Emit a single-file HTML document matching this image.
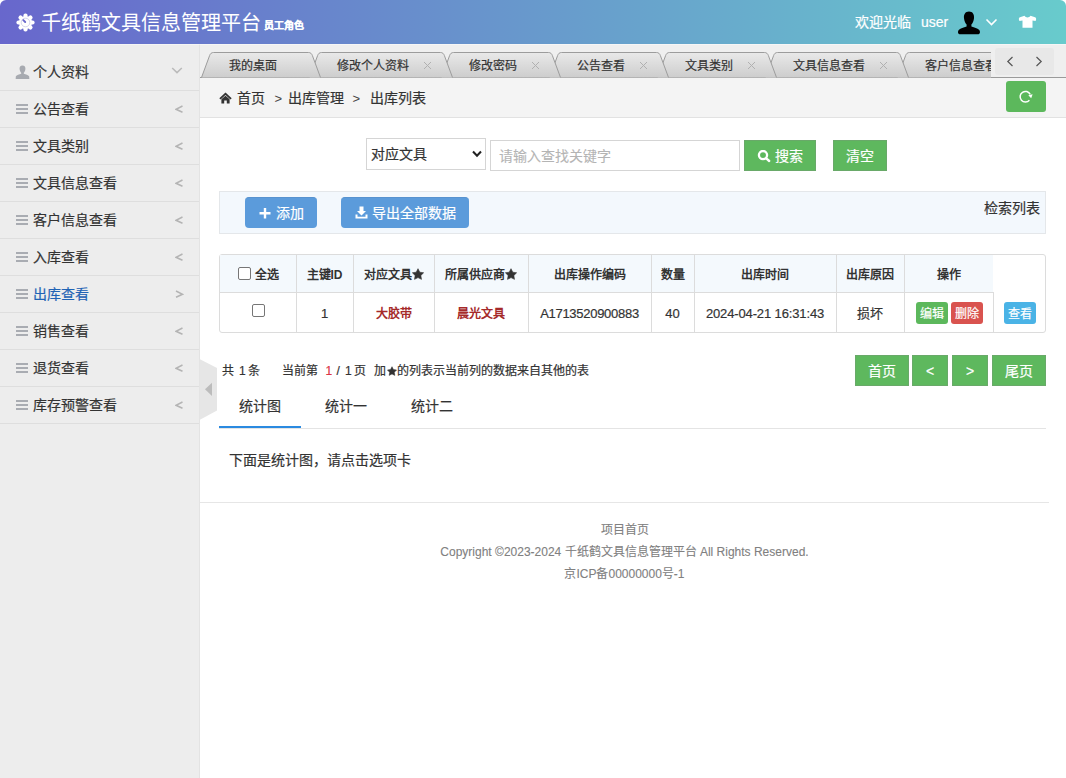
<!DOCTYPE html><html lang="zh-CN"><head><meta charset="utf-8"><style>
*{margin:0;padding:0;box-sizing:border-box}
html,body{width:1066px;height:778px;overflow:hidden;background:#fff}
body{position:relative;font-family:"Liberation Sans",sans-serif;color:#333;font-size:14px;-webkit-text-stroke:0.2px currentColor}
.a{position:absolute;white-space:nowrap}
</style></head><body>
<div class="a" style="left:0;top:0;width:1066px;height:44px;background:linear-gradient(to right,#6867cc,#68cbcc);border-radius:6px 6px 0 0"></div>
<svg class="a" style="left:15.5px;top:13px" width="19" height="19" viewBox="0 0 19 19">
<g fill="#fff"><circle cx="9.5" cy="9.5" r="6.6"/>
<g><rect x="7.4" y="0.4" width="4.2" height="4.4" rx="2"/><rect x="7.4" y="14.2" width="4.2" height="4.4" rx="2"/><rect x="0.4" y="7.4" width="4.4" height="4.2" rx="2"/><rect x="14.2" y="7.4" width="4.4" height="4.2" rx="2"/></g>
<g transform="rotate(45 9.5 9.5)"><rect x="7.4" y="0.4" width="4.2" height="4.4" rx="2"/><rect x="7.4" y="14.2" width="4.2" height="4.4" rx="2"/><rect x="0.4" y="7.4" width="4.4" height="4.2" rx="2"/><rect x="14.2" y="7.4" width="4.4" height="4.2" rx="2"/></g></g>
<circle cx="9.5" cy="9.5" r="4.3" fill="none" stroke="#b9b9e0" stroke-width="0.6"/>
<path d="M7.3 7.1 L9.2 9.0" stroke="#6a68cc" stroke-width="1.9" stroke-linecap="round"/>
</svg>
<div class="a" style="left:41px;top:10px;font-size:20px;line-height:26px;color:#fff;-webkit-text-stroke:0.05px currentColor">千纸鹤文具信息管理平台</div>
<div class="a" style="left:264px;top:19px;font-size:10px;line-height:14px;color:#fff;font-weight:bold">员工角色</div>
<div class="a" style="left:855px;top:12px;font-size:14px;line-height:20px;color:#fff">欢迎光临</div>
<div class="a" style="left:921px;top:12px;font-size:14px;line-height:20px;color:#fff">user</div>
<svg class="a" style="left:957px;top:11px" width="24" height="24" viewBox="0 0 24 24"><path fill="#000" d="M12 0.6 C8.3 0.6 6.6 3.5 7 7.2 C7.3 10 8.4 12.4 9.6 13.6 L9.6 15.4 C6.5 16.2 3.6 17.2 2 18.8 C0.6 20.2 0.6 22.8 2.6 23.2 L21.4 23.2 C23.4 22.8 23.4 20.2 22 18.8 C20.4 17.2 17.5 16.2 14.4 15.4 L14.4 13.6 C15.6 12.4 16.7 10 17 7.2 C17.4 3.5 15.7 0.6 12 0.6 Z"/></svg>
<svg class="a" style="left:985px;top:18px" width="13" height="9" viewBox="0 0 13 9"><path d="M1.5 1.5 L6.5 6.5 L11.5 1.5" fill="none" stroke="#fff" stroke-width="1.6"/></svg>
<svg class="a" style="left:1018px;top:15px" width="19" height="14" viewBox="0 0 19 14"><path fill="#fff" d="M6.5 0.8 C7.3 2 8.2 2.5 9.5 2.5 C10.8 2.5 11.7 2 12.5 0.8 L17 2.3 C17.9 2.7 18.3 3.5 18.1 4.5 L17.6 6 L14.5 5.5 L14.5 12.8 L4.5 12.8 L4.5 5.5 L1.4 6 L0.9 4.5 C0.7 3.5 1.1 2.7 2 2.3 Z"/></svg>
<div class="a" style="left:0;top:44px;width:200px;height:734px;background:#ededed;border-right:1px solid #e3e3e3"></div>
<div class="a" style="left:0;top:90px;width:199px;height:1px;background:#dedede"></div>
<div class="a" style="left:33px;top:62.0px;font-size:14px;line-height:20px;color:#333">个人资料</div>
<svg class="a" style="left:14.5px;top:65.0px" width="15" height="14" viewBox="0 0 14 13.3" preserveAspectRatio="none"><path fill="#a7aab0" d="M7 0.5 C5 0.5 4 2 4.3 4 C4.5 5.6 5.3 6.8 5.8 7.3 L5.8 8.3 C4 8.9 1.5 9.4 0.8 10.8 L0.6 13.3 L13.4 13.3 L13.2 10.8 C12.5 9.4 10 8.9 8.2 8.3 L8.2 7.3 C8.7 6.8 9.5 5.6 9.7 4 C10 2 9 0.5 7 0.5Z"/></svg>
<svg class="a" style="left:171px;top:67.0px" width="12" height="8" viewBox="0 0 12 8"><path d="M1.2 1 L6 5.6 L10.8 1" fill="none" stroke="#bababa" stroke-width="1.5"/></svg>
<div class="a" style="left:0;top:127px;width:199px;height:1px;background:#dedede"></div>
<div class="a" style="left:33px;top:99.0px;font-size:14px;line-height:20px;color:#333">公告查看</div>
<div class="a" style="left:16px;top:104px;width:12px;height:2px;background:#a9acb2"></div>
<div class="a" style="left:16px;top:108px;width:12px;height:2px;background:#a9acb2"></div>
<div class="a" style="left:16px;top:112px;width:12px;height:2px;background:#a9acb2"></div>
<svg class="a" style="left:174.5px;top:104.7px" width="9" height="9" viewBox="0 0 9 9"><path d="M7.5 1 L1 4.3 L7.5 7.3" fill="none" stroke="#b4b4b4" stroke-width="1.5"/></svg>
<div class="a" style="left:0;top:164px;width:199px;height:1px;background:#dedede"></div>
<div class="a" style="left:33px;top:136.0px;font-size:14px;line-height:20px;color:#333">文具类别</div>
<div class="a" style="left:16px;top:141px;width:12px;height:2px;background:#a9acb2"></div>
<div class="a" style="left:16px;top:145px;width:12px;height:2px;background:#a9acb2"></div>
<div class="a" style="left:16px;top:149px;width:12px;height:2px;background:#a9acb2"></div>
<svg class="a" style="left:174.5px;top:141.7px" width="9" height="9" viewBox="0 0 9 9"><path d="M7.5 1 L1 4.3 L7.5 7.3" fill="none" stroke="#b4b4b4" stroke-width="1.5"/></svg>
<div class="a" style="left:0;top:201px;width:199px;height:1px;background:#dedede"></div>
<div class="a" style="left:33px;top:173.0px;font-size:14px;line-height:20px;color:#333">文具信息查看</div>
<div class="a" style="left:16px;top:178px;width:12px;height:2px;background:#a9acb2"></div>
<div class="a" style="left:16px;top:182px;width:12px;height:2px;background:#a9acb2"></div>
<div class="a" style="left:16px;top:186px;width:12px;height:2px;background:#a9acb2"></div>
<svg class="a" style="left:174.5px;top:178.7px" width="9" height="9" viewBox="0 0 9 9"><path d="M7.5 1 L1 4.3 L7.5 7.3" fill="none" stroke="#b4b4b4" stroke-width="1.5"/></svg>
<div class="a" style="left:0;top:238px;width:199px;height:1px;background:#dedede"></div>
<div class="a" style="left:33px;top:210.0px;font-size:14px;line-height:20px;color:#333">客户信息查看</div>
<div class="a" style="left:16px;top:215px;width:12px;height:2px;background:#a9acb2"></div>
<div class="a" style="left:16px;top:219px;width:12px;height:2px;background:#a9acb2"></div>
<div class="a" style="left:16px;top:223px;width:12px;height:2px;background:#a9acb2"></div>
<svg class="a" style="left:174.5px;top:215.7px" width="9" height="9" viewBox="0 0 9 9"><path d="M7.5 1 L1 4.3 L7.5 7.3" fill="none" stroke="#b4b4b4" stroke-width="1.5"/></svg>
<div class="a" style="left:0;top:275px;width:199px;height:1px;background:#dedede"></div>
<div class="a" style="left:33px;top:247.0px;font-size:14px;line-height:20px;color:#333">入库查看</div>
<div class="a" style="left:16px;top:252px;width:12px;height:2px;background:#a9acb2"></div>
<div class="a" style="left:16px;top:256px;width:12px;height:2px;background:#a9acb2"></div>
<div class="a" style="left:16px;top:260px;width:12px;height:2px;background:#a9acb2"></div>
<svg class="a" style="left:174.5px;top:252.7px" width="9" height="9" viewBox="0 0 9 9"><path d="M7.5 1 L1 4.3 L7.5 7.3" fill="none" stroke="#b4b4b4" stroke-width="1.5"/></svg>
<div class="a" style="left:0;top:312px;width:199px;height:1px;background:#dedede"></div>
<div class="a" style="left:33px;top:284.0px;font-size:14px;line-height:20px;color:#1f63b5">出库查看</div>
<div class="a" style="left:16px;top:289px;width:12px;height:2px;background:#a9acb2"></div>
<div class="a" style="left:16px;top:293px;width:12px;height:2px;background:#a9acb2"></div>
<div class="a" style="left:16px;top:297px;width:12px;height:2px;background:#a9acb2"></div>
<svg class="a" style="left:174.5px;top:289.7px" width="9" height="9" viewBox="0 0 9 9"><path d="M1 1 L7.5 4.3 L1 7.3" fill="none" stroke="#b4b4b4" stroke-width="1.5"/></svg>
<div class="a" style="left:0;top:349px;width:199px;height:1px;background:#dedede"></div>
<div class="a" style="left:33px;top:321.0px;font-size:14px;line-height:20px;color:#333">销售查看</div>
<div class="a" style="left:16px;top:326px;width:12px;height:2px;background:#a9acb2"></div>
<div class="a" style="left:16px;top:330px;width:12px;height:2px;background:#a9acb2"></div>
<div class="a" style="left:16px;top:334px;width:12px;height:2px;background:#a9acb2"></div>
<svg class="a" style="left:174.5px;top:326.7px" width="9" height="9" viewBox="0 0 9 9"><path d="M7.5 1 L1 4.3 L7.5 7.3" fill="none" stroke="#b4b4b4" stroke-width="1.5"/></svg>
<div class="a" style="left:0;top:386px;width:199px;height:1px;background:#dedede"></div>
<div class="a" style="left:33px;top:358.0px;font-size:14px;line-height:20px;color:#333">退货查看</div>
<div class="a" style="left:16px;top:363px;width:12px;height:2px;background:#a9acb2"></div>
<div class="a" style="left:16px;top:367px;width:12px;height:2px;background:#a9acb2"></div>
<div class="a" style="left:16px;top:371px;width:12px;height:2px;background:#a9acb2"></div>
<svg class="a" style="left:174.5px;top:363.7px" width="9" height="9" viewBox="0 0 9 9"><path d="M7.5 1 L1 4.3 L7.5 7.3" fill="none" stroke="#b4b4b4" stroke-width="1.5"/></svg>
<div class="a" style="left:0;top:423px;width:199px;height:1px;background:#dedede"></div>
<div class="a" style="left:33px;top:395.0px;font-size:14px;line-height:20px;color:#333">库存预警查看</div>
<div class="a" style="left:16px;top:400px;width:12px;height:2px;background:#a9acb2"></div>
<div class="a" style="left:16px;top:404px;width:12px;height:2px;background:#a9acb2"></div>
<div class="a" style="left:16px;top:408px;width:12px;height:2px;background:#a9acb2"></div>
<svg class="a" style="left:174.5px;top:400.7px" width="9" height="9" viewBox="0 0 9 9"><path d="M7.5 1 L1 4.3 L7.5 7.3" fill="none" stroke="#b4b4b4" stroke-width="1.5"/></svg>
<svg class="a" style="left:199px;top:358px" width="19" height="63" viewBox="0 0 19 63"><path d="M0.5 1 L18 10 L18 52.5 L0.5 62 Z" fill="#e6e6e6"/><path d="M6 31.3 L13 24.8 L13 38 Z" fill="#bcbcbc"/></svg>
<div class="a" style="left:200px;top:44px;width:866px;height:34px;background:#efefef"></div>
<div class="a" style="left:200px;top:78px;width:866px;height:40px;background:#f4f4f4;border-bottom:1px solid #e2e2e2"></div>
<div class="a" style="left:200px;top:77px;width:866px;height:1px;background:#9a9a9a"></div>
<div class="a" style="left:200px;top:44px;width:791px;height:34px;overflow:hidden">
<div class="a" style="left:calc(-200px + 200.5px);top:8px;width:120px;height:26px;z-index:100"><svg class="a" style="left:0;top:0" width="120" height="26" viewBox="0 0 120 26"><defs><linearGradient id="tg0" x1="0" y1="0" x2="0" y2="1"><stop offset="0" stop-color="#e9e9e9"/><stop offset="1" stop-color="#cdcdcd"/></linearGradient></defs><path d="M0.5 25.5 L8.6 3.6 C9.3 1.6 10.5 0.5 12.6 0.5 L107.4 0.5 C109.5 0.5 110.7 1.6 111.4 3.6 L119.5 25.5 Z" fill="url(#tg0)"/><path d="M0.5 25.5 L8.6 3.6 C9.3 1.6 10.5 0.5 12.6 0.5 L107.4 0.5 C109.5 0.5 110.7 1.6 111.4 3.6 L119.5 25.5" fill="none" stroke="#9c9c9c" stroke-width="1"/></svg><div class="a" style="left:28px;top:6px;font-size:12px;line-height:16px;color:#333">我的桌面</div></div>
<div class="a" style="left:calc(-200px + 308.5px);top:8px;width:144px;height:26px;z-index:99"><svg class="a" style="left:0;top:0" width="144" height="26" viewBox="0 0 144 26"><defs><linearGradient id="tg1" x1="0" y1="0" x2="0" y2="1"><stop offset="0" stop-color="#e9e9e9"/><stop offset="1" stop-color="#cdcdcd"/></linearGradient></defs><path d="M0.5 25.5 L8.6 3.6 C9.3 1.6 10.5 0.5 12.6 0.5 L131.4 0.5 C133.5 0.5 134.7 1.6 135.4 3.6 L143.5 25.5 Z" fill="url(#tg1)"/><path d="M0.5 25.5 L8.6 3.6 C9.3 1.6 10.5 0.5 12.6 0.5 L131.4 0.5 C133.5 0.5 134.7 1.6 135.4 3.6 L143.5 25.5" fill="none" stroke="#9c9c9c" stroke-width="1"/></svg><div class="a" style="left:28px;top:6px;font-size:12px;line-height:16px;color:#333">修改个人资料</div><svg class="a" style="left:114px;top:9px" width="9" height="9" viewBox="0 0 9 9"><path d="M1 1 L8 8 M8 1 L1 8" stroke="#b0b0b0" stroke-width="1"/></svg></div>
<div class="a" style="left:calc(-200px + 440.5px);top:8px;width:120px;height:26px;z-index:98"><svg class="a" style="left:0;top:0" width="120" height="26" viewBox="0 0 120 26"><defs><linearGradient id="tg2" x1="0" y1="0" x2="0" y2="1"><stop offset="0" stop-color="#e9e9e9"/><stop offset="1" stop-color="#cdcdcd"/></linearGradient></defs><path d="M0.5 25.5 L8.6 3.6 C9.3 1.6 10.5 0.5 12.6 0.5 L107.4 0.5 C109.5 0.5 110.7 1.6 111.4 3.6 L119.5 25.5 Z" fill="url(#tg2)"/><path d="M0.5 25.5 L8.6 3.6 C9.3 1.6 10.5 0.5 12.6 0.5 L107.4 0.5 C109.5 0.5 110.7 1.6 111.4 3.6 L119.5 25.5" fill="none" stroke="#9c9c9c" stroke-width="1"/></svg><div class="a" style="left:28px;top:6px;font-size:12px;line-height:16px;color:#333">修改密码</div><svg class="a" style="left:90px;top:9px" width="9" height="9" viewBox="0 0 9 9"><path d="M1 1 L8 8 M8 1 L1 8" stroke="#b0b0b0" stroke-width="1"/></svg></div>
<div class="a" style="left:calc(-200px + 548.5px);top:8px;width:120px;height:26px;z-index:97"><svg class="a" style="left:0;top:0" width="120" height="26" viewBox="0 0 120 26"><defs><linearGradient id="tg3" x1="0" y1="0" x2="0" y2="1"><stop offset="0" stop-color="#e9e9e9"/><stop offset="1" stop-color="#cdcdcd"/></linearGradient></defs><path d="M0.5 25.5 L8.6 3.6 C9.3 1.6 10.5 0.5 12.6 0.5 L107.4 0.5 C109.5 0.5 110.7 1.6 111.4 3.6 L119.5 25.5 Z" fill="url(#tg3)"/><path d="M0.5 25.5 L8.6 3.6 C9.3 1.6 10.5 0.5 12.6 0.5 L107.4 0.5 C109.5 0.5 110.7 1.6 111.4 3.6 L119.5 25.5" fill="none" stroke="#9c9c9c" stroke-width="1"/></svg><div class="a" style="left:28px;top:6px;font-size:12px;line-height:16px;color:#333">公告查看</div><svg class="a" style="left:90px;top:9px" width="9" height="9" viewBox="0 0 9 9"><path d="M1 1 L8 8 M8 1 L1 8" stroke="#b0b0b0" stroke-width="1"/></svg></div>
<div class="a" style="left:calc(-200px + 656.5px);top:8px;width:120px;height:26px;z-index:96"><svg class="a" style="left:0;top:0" width="120" height="26" viewBox="0 0 120 26"><defs><linearGradient id="tg4" x1="0" y1="0" x2="0" y2="1"><stop offset="0" stop-color="#e9e9e9"/><stop offset="1" stop-color="#cdcdcd"/></linearGradient></defs><path d="M0.5 25.5 L8.6 3.6 C9.3 1.6 10.5 0.5 12.6 0.5 L107.4 0.5 C109.5 0.5 110.7 1.6 111.4 3.6 L119.5 25.5 Z" fill="url(#tg4)"/><path d="M0.5 25.5 L8.6 3.6 C9.3 1.6 10.5 0.5 12.6 0.5 L107.4 0.5 C109.5 0.5 110.7 1.6 111.4 3.6 L119.5 25.5" fill="none" stroke="#9c9c9c" stroke-width="1"/></svg><div class="a" style="left:28px;top:6px;font-size:12px;line-height:16px;color:#333">文具类别</div><svg class="a" style="left:90px;top:9px" width="9" height="9" viewBox="0 0 9 9"><path d="M1 1 L8 8 M8 1 L1 8" stroke="#b0b0b0" stroke-width="1"/></svg></div>
<div class="a" style="left:calc(-200px + 764.5px);top:8px;width:144px;height:26px;z-index:95"><svg class="a" style="left:0;top:0" width="144" height="26" viewBox="0 0 144 26"><defs><linearGradient id="tg5" x1="0" y1="0" x2="0" y2="1"><stop offset="0" stop-color="#e9e9e9"/><stop offset="1" stop-color="#cdcdcd"/></linearGradient></defs><path d="M0.5 25.5 L8.6 3.6 C9.3 1.6 10.5 0.5 12.6 0.5 L131.4 0.5 C133.5 0.5 134.7 1.6 135.4 3.6 L143.5 25.5 Z" fill="url(#tg5)"/><path d="M0.5 25.5 L8.6 3.6 C9.3 1.6 10.5 0.5 12.6 0.5 L131.4 0.5 C133.5 0.5 134.7 1.6 135.4 3.6 L143.5 25.5" fill="none" stroke="#9c9c9c" stroke-width="1"/></svg><div class="a" style="left:28px;top:6px;font-size:12px;line-height:16px;color:#333">文具信息查看</div><svg class="a" style="left:114px;top:9px" width="9" height="9" viewBox="0 0 9 9"><path d="M1 1 L8 8 M8 1 L1 8" stroke="#b0b0b0" stroke-width="1"/></svg></div>
<div class="a" style="left:calc(-200px + 896.5px);top:8px;width:144px;height:26px;z-index:94"><svg class="a" style="left:0;top:0" width="144" height="26" viewBox="0 0 144 26"><defs><linearGradient id="tg6" x1="0" y1="0" x2="0" y2="1"><stop offset="0" stop-color="#e9e9e9"/><stop offset="1" stop-color="#cdcdcd"/></linearGradient></defs><path d="M0.5 25.5 L8.6 3.6 C9.3 1.6 10.5 0.5 12.6 0.5 L131.4 0.5 C133.5 0.5 134.7 1.6 135.4 3.6 L143.5 25.5 Z" fill="url(#tg6)"/><path d="M0.5 25.5 L8.6 3.6 C9.3 1.6 10.5 0.5 12.6 0.5 L131.4 0.5 C133.5 0.5 134.7 1.6 135.4 3.6 L143.5 25.5" fill="none" stroke="#9c9c9c" stroke-width="1"/></svg><div class="a" style="left:28px;top:6px;font-size:12px;line-height:16px;color:#333">客户信息查看</div><svg class="a" style="left:114px;top:9px" width="9" height="9" viewBox="0 0 9 9"><path d="M1 1 L8 8 M8 1 L1 8" stroke="#b0b0b0" stroke-width="1"/></svg></div>
</div>
<div class="a" style="left:0;top:44px;width:1066px;height:1px;background:rgba(255,255,255,0.45);z-index:200"></div>
<div class="a" style="left:995px;top:48px;width:59px;height:27px;background:#e8e8e8;border-radius:3px"></div>
<svg class="a" style="left:1006px;top:56px" width="8" height="11" viewBox="0 0 8 11"><path d="M6.5 1 L1.8 5.5 L6.5 10" fill="none" stroke="#555" stroke-width="1.2"/></svg>
<svg class="a" style="left:1035px;top:56px" width="8" height="11" viewBox="0 0 8 11"><path d="M1.5 1 L6.2 5.5 L1.5 10" fill="none" stroke="#555" stroke-width="1.2"/></svg>
<div class="a" style="left:1006px;top:81px;width:40px;height:31px;background:#5cb85c;border-radius:3px"></div>
<svg class="a" style="left:1017px;top:88px" width="17" height="17" viewBox="0 0 17 17"><path d="M12.4 12.2 A5.3 5.3 0 1 1 13.2 6.4" fill="none" stroke="#fff" stroke-width="1.5"/><path d="M11.3 7.3 L15.6 6.2 L14.2 10.2 Z" fill="#fff"/></svg>
<svg class="a" style="left:219px;top:92px" width="13" height="12" viewBox="0 0 13 12"><path d="M6.5 0.5 L0.3 6.2 L1.6 7.4 L6.5 2.9 L11.4 7.4 L12.7 6.2 Z M2.4 7.3 L6.5 3.7 L10.6 7.3 L10.6 11.5 L7.8 11.5 L7.8 8.6 L5.2 8.6 L5.2 11.5 L2.4 11.5 Z" fill="#333"/></svg>
<div class="a" style="left:237px;top:88px;font-size:14px;line-height:20px;color:#333">首页</div>
<div class="a" style="left:274.5px;top:89px;font-size:13px;line-height:20px;color:#444;-webkit-text-stroke:0">&gt;</div>
<div class="a" style="left:288px;top:88px;font-size:14px;line-height:20px;color:#333">出库管理</div>
<div class="a" style="left:352.5px;top:89px;font-size:13px;line-height:20px;color:#444;-webkit-text-stroke:0">&gt;</div>
<div class="a" style="left:370px;top:88px;font-size:14px;line-height:20px;color:#333">出库列表</div>
<div class="a" style="left:366px;top:138px;width:120px;height:32px;border:1px solid #d5d5d5;background:#fff"></div>
<div class="a" style="left:371px;top:144px;font-size:14px;line-height:20px;color:#333">对应文具</div>
<svg class="a" style="left:472px;top:150px" width="10" height="8" viewBox="0 0 10 8"><path d="M1 1.5 L5 5.8 L9 1.5" fill="none" stroke="#222" stroke-width="2"/></svg>
<div class="a" style="left:490px;top:140px;width:250px;height:31px;border:1px solid #d5d5d5;background:#fff"></div>
<div class="a" style="left:499px;top:146px;font-size:14px;line-height:20px;color:#b4b4b4;-webkit-text-stroke:0.1px currentColor">请输入查找关键字</div>
<div class="a" style="left:744px;top:140px;width:72px;height:31px;background:#5eb85e;border:1px solid #69a969"></div>
<svg class="a" style="left:757px;top:150px" width="14" height="13" viewBox="0 0 14 13"><circle cx="6" cy="5.1" r="4.1" fill="none" stroke="#fff" stroke-width="2.3"/><path d="M9.2 8.4 L12.2 11" stroke="#fff" stroke-width="2.4" stroke-linecap="round"/></svg>
<div class="a" style="left:775px;top:146px;font-size:14px;line-height:20px;color:#fff">搜索</div>
<div class="a" style="left:833px;top:140px;width:54px;height:31px;background:#5eb85e;border:1px solid #69a969"></div>
<div class="a" style="left:846px;top:146px;font-size:14px;line-height:20px;color:#fff">清空</div>
<div class="a" style="left:219px;top:191px;width:827px;height:43px;background:#f3f8fd;border:1px solid #e4e7ea"></div>
<div class="a" style="left:245px;top:197px;width:72px;height:31px;background:#5b9bdb;border-radius:4px;border-top:1px solid #5792cf"></div>
<svg class="a" style="left:259px;top:207px" width="12" height="12" viewBox="0 0 12 12"><path d="M6 1 V11.5 M0.5 6.3 H11.5" stroke="#fff" stroke-width="2.4"/></svg>
<div class="a" style="left:276px;top:203px;font-size:14px;line-height:20px;color:#fff">添加</div>
<div class="a" style="left:341px;top:197px;width:128px;height:31px;background:#5b9bdb;border-radius:4px;border-top:1px solid #5792cf"></div>
<svg class="a" style="left:355px;top:206px" width="13" height="13" viewBox="0 0 13 13"><path d="M4.5 0.5 H8.5 V5 H11 L6.5 9.5 L2 5 H4.5 Z" fill="#fff"/><path d="M0.5 8.5 V12.5 H12.5 V8.5 H10.5 V10.8 H2.5 V8.5 Z" fill="#fff"/></svg>
<div class="a" style="left:372px;top:203px;font-size:14px;line-height:20px;color:#fff">导出全部数据</div>
<div class="a" style="left:984px;top:198px;font-size:14px;line-height:20px;color:#333">检索列表</div>
<div class="a" style="left:219px;top:254px;width:827px;height:79px;border:1px solid #dcdcdc;border-radius:3px;background:#fff"></div>
<div class="a" style="left:220px;top:255px;width:773px;height:37px;background:#f4f9fd"></div>
<div class="a" style="left:220px;top:292px;width:774px;height:1px;background:#dcdcdc"></div>
<div class="a" style="left:296px;top:255px;width:1px;height:77px;background:#dcdcdc"></div>
<div class="a" style="left:353px;top:255px;width:1px;height:77px;background:#dcdcdc"></div>
<div class="a" style="left:434px;top:255px;width:1px;height:77px;background:#dcdcdc"></div>
<div class="a" style="left:528px;top:255px;width:1px;height:77px;background:#dcdcdc"></div>
<div class="a" style="left:651px;top:255px;width:1px;height:77px;background:#dcdcdc"></div>
<div class="a" style="left:694px;top:255px;width:1px;height:77px;background:#dcdcdc"></div>
<div class="a" style="left:836px;top:255px;width:1px;height:77px;background:#dcdcdc"></div>
<div class="a" style="left:904px;top:255px;width:1px;height:77px;background:#dcdcdc"></div>
<div class="a" style="left:993px;top:292px;width:1px;height:40px;background:#dcdcdc"></div>
<div class="a" style="left:238px;top:267px;width:13px;height:13px;border:1px solid #767676;border-radius:2px;background:#fff"></div>
<div class="a" style="left:255px;top:265px;font-size:12px;line-height:20px;font-weight:bold;-webkit-text-stroke:0;color:#333">全选</div>
<div class="a" style="left:296px;top:265px;width:57px;text-align:center;font-size:12px;line-height:20px;font-weight:bold;-webkit-text-stroke:0;color:#333">主键ID</div>
<div class="a" style="left:353px;top:265px;width:81px;text-align:center;font-size:12px;line-height:20px;font-weight:bold;-webkit-text-stroke:0;color:#333">对应文具<svg width="12" height="12" viewBox="0 0 12 12" style="vertical-align:-1px"><path d="M6.00,0.70 L7.76,4.17 L11.61,4.78 L8.85,7.53 L9.47,11.37 L6.00,9.60 L2.53,11.37 L3.15,7.53 L0.39,4.78 L4.24,4.17Z" fill="#333" stroke="#333" stroke-width="0.6" stroke-linejoin="round"/></svg></div>
<div class="a" style="left:434px;top:265px;width:94px;text-align:center;font-size:12px;line-height:20px;font-weight:bold;-webkit-text-stroke:0;color:#333">所属供应商<svg width="12" height="12" viewBox="0 0 12 12" style="vertical-align:-1px"><path d="M6.00,0.70 L7.76,4.17 L11.61,4.78 L8.85,7.53 L9.47,11.37 L6.00,9.60 L2.53,11.37 L3.15,7.53 L0.39,4.78 L4.24,4.17Z" fill="#333" stroke="#333" stroke-width="0.6" stroke-linejoin="round"/></svg></div>
<div class="a" style="left:528px;top:265px;width:123px;text-align:center;font-size:12px;line-height:20px;font-weight:bold;-webkit-text-stroke:0;color:#333">出库操作编码</div>
<div class="a" style="left:651px;top:265px;width:43px;text-align:center;font-size:12px;line-height:20px;font-weight:bold;-webkit-text-stroke:0;color:#333">数量</div>
<div class="a" style="left:694px;top:265px;width:142px;text-align:center;font-size:12px;line-height:20px;font-weight:bold;-webkit-text-stroke:0;color:#333">出库时间</div>
<div class="a" style="left:836px;top:265px;width:68px;text-align:center;font-size:12px;line-height:20px;font-weight:bold;-webkit-text-stroke:0;color:#333">出库原因</div>
<div class="a" style="left:904px;top:265px;width:89px;text-align:center;font-size:12px;line-height:20px;font-weight:bold;-webkit-text-stroke:0;color:#333">操作</div>
<div class="a" style="left:252px;top:304px;width:13px;height:13px;border:1px solid #767676;border-radius:2px;background:#fff"></div>
<div class="a" style="left:296px;top:304px;width:57px;text-align:center;font-size:13px;line-height:20px;color:#333;letter-spacing:0">1</div>
<div class="a" style="left:353px;top:304px;width:81px;text-align:center;font-size:12px;line-height:20px;font-weight:bold;-webkit-text-stroke:0;color:#a52a2a">大胶带</div>
<div class="a" style="left:434px;top:304px;width:94px;text-align:center;font-size:12px;line-height:20px;font-weight:bold;-webkit-text-stroke:0;color:#a52a2a">晨光文具</div>
<div class="a" style="left:528px;top:304px;width:123px;text-align:center;font-size:13px;line-height:20px;color:#333;letter-spacing:-0.28px">A1713520900883</div>
<div class="a" style="left:651px;top:304px;width:43px;text-align:center;font-size:13px;line-height:20px;color:#333;letter-spacing:0">40</div>
<div class="a" style="left:694px;top:304px;width:142px;text-align:center;font-size:13px;line-height:20px;color:#333;letter-spacing:-0.13px">2024-04-21 16:31:43</div>
<div class="a" style="left:836px;top:304px;width:68px;text-align:center;font-size:13px;line-height:20px;color:#333;letter-spacing:0">损坏</div>
<div class="a" style="left:916px;top:302px;width:32px;height:22px;background:#5cb85c;border-radius:3px;color:#fff;font-size:12px;line-height:24px;text-align:center">编辑</div>
<div class="a" style="left:951px;top:302px;width:32px;height:22px;background:#d9534f;border-radius:3px;color:#fff;font-size:12px;line-height:24px;text-align:center">删除</div>
<div class="a" style="left:1004px;top:302px;width:32px;height:22px;background:#4ab3e6;border-radius:3px;color:#fff;font-size:12px;line-height:24px;text-align:center">查看</div>
<div class="a" style="left:222px;top:362px;font-size:12px;line-height:18px;color:#333">共</div>
<div class="a" style="left:239px;top:362px;font-size:12px;line-height:18px;color:#333">1</div>
<div class="a" style="left:248px;top:362px;font-size:12px;line-height:18px;color:#333">条</div>
<div class="a" style="left:282px;top:362px;font-size:12px;line-height:18px;color:#333">当前第</div>
<div class="a" style="left:325.5px;top:362px;font-size:12px;line-height:18px;color:#dc3545">1</div>
<div class="a" style="left:336.5px;top:362px;font-size:12px;line-height:18px;color:#333">/</div>
<div class="a" style="left:345px;top:362px;font-size:12px;line-height:18px;color:#333">1</div>
<div class="a" style="left:353.5px;top:362px;font-size:12px;line-height:18px;color:#333">页</div>
<div class="a" style="left:373.5px;top:362px;font-size:12px;line-height:18px;color:#333">加</div>
<div class="a" style="left:386.5px;top:362px;font-size:12px;line-height:18px;color:#333"><svg width="10" height="10" viewBox="0 0 10 10" style="vertical-align:-1px"><path d="M5.00,0.70 L6.44,3.52 L9.57,4.02 L7.33,6.26 L7.82,9.38 L5.00,7.95 L2.18,9.38 L2.67,6.26 L0.43,4.02 L3.56,3.52Z" fill="#333" stroke="#333" stroke-width="0.5" stroke-linejoin="round"/></svg></div>
<div class="a" style="left:397px;top:362px;font-size:12px;line-height:18px;color:#333">的列表示当前列的数据来自其他的表</div>
<div class="a" style="left:855px;top:355px;width:54px;height:31px;background:#5eb85e;border:1px solid #69a969;color:#fff;font-size:14px;line-height:30px;text-align:center">首页</div>
<div class="a" style="left:912px;top:355px;width:36px;height:31px;background:#5eb85e;border:1px solid #69a969;color:#fff;font-size:14px;line-height:30px;text-align:center">&lt;</div>
<div class="a" style="left:952px;top:355px;width:36px;height:31px;background:#5eb85e;border:1px solid #69a969;color:#fff;font-size:14px;line-height:30px;text-align:center">&gt;</div>
<div class="a" style="left:992px;top:355px;width:54px;height:31px;background:#5eb85e;border:1px solid #69a969;color:#fff;font-size:14px;line-height:30px;text-align:center">尾页</div>
<div class="a" style="left:239px;top:396px;font-size:14px;line-height:20px;color:#333">统计图</div>
<div class="a" style="left:325px;top:396px;font-size:14px;line-height:20px;color:#333">统计一</div>
<div class="a" style="left:411px;top:396px;font-size:14px;line-height:20px;color:#333">统计二</div>
<div class="a" style="left:219px;top:428px;width:827px;height:1px;background:#e4e4e4"></div>
<div class="a" style="left:219px;top:426px;width:82px;height:2px;background:#2a8ae0"></div>
<div class="a" style="left:229px;top:450px;font-size:14px;line-height:20px;color:#333">下面是统计图，请点击选项卡</div>
<div class="a" style="left:200px;top:502px;width:849px;height:1px;background:#e6e6e6"></div>
<div class="a" style="left:200px;top:521px;width:849px;text-align:center;font-size:12px;line-height:18px;color:#808080;-webkit-text-stroke:0.1px currentColor">项目首页</div>
<div class="a" style="left:200px;top:543px;width:849px;text-align:center;font-size:12px;line-height:18px;color:#808080;-webkit-text-stroke:0.1px currentColor">Copyright ©2023-2024 千纸鹤文具信息管理平台 All Rights Reserved.</div>
<div class="a" style="left:200px;top:565px;width:849px;text-align:center;font-size:12px;line-height:18px;color:#808080;-webkit-text-stroke:0.1px currentColor">京ICP备00000000号-1</div>
</body></html>
